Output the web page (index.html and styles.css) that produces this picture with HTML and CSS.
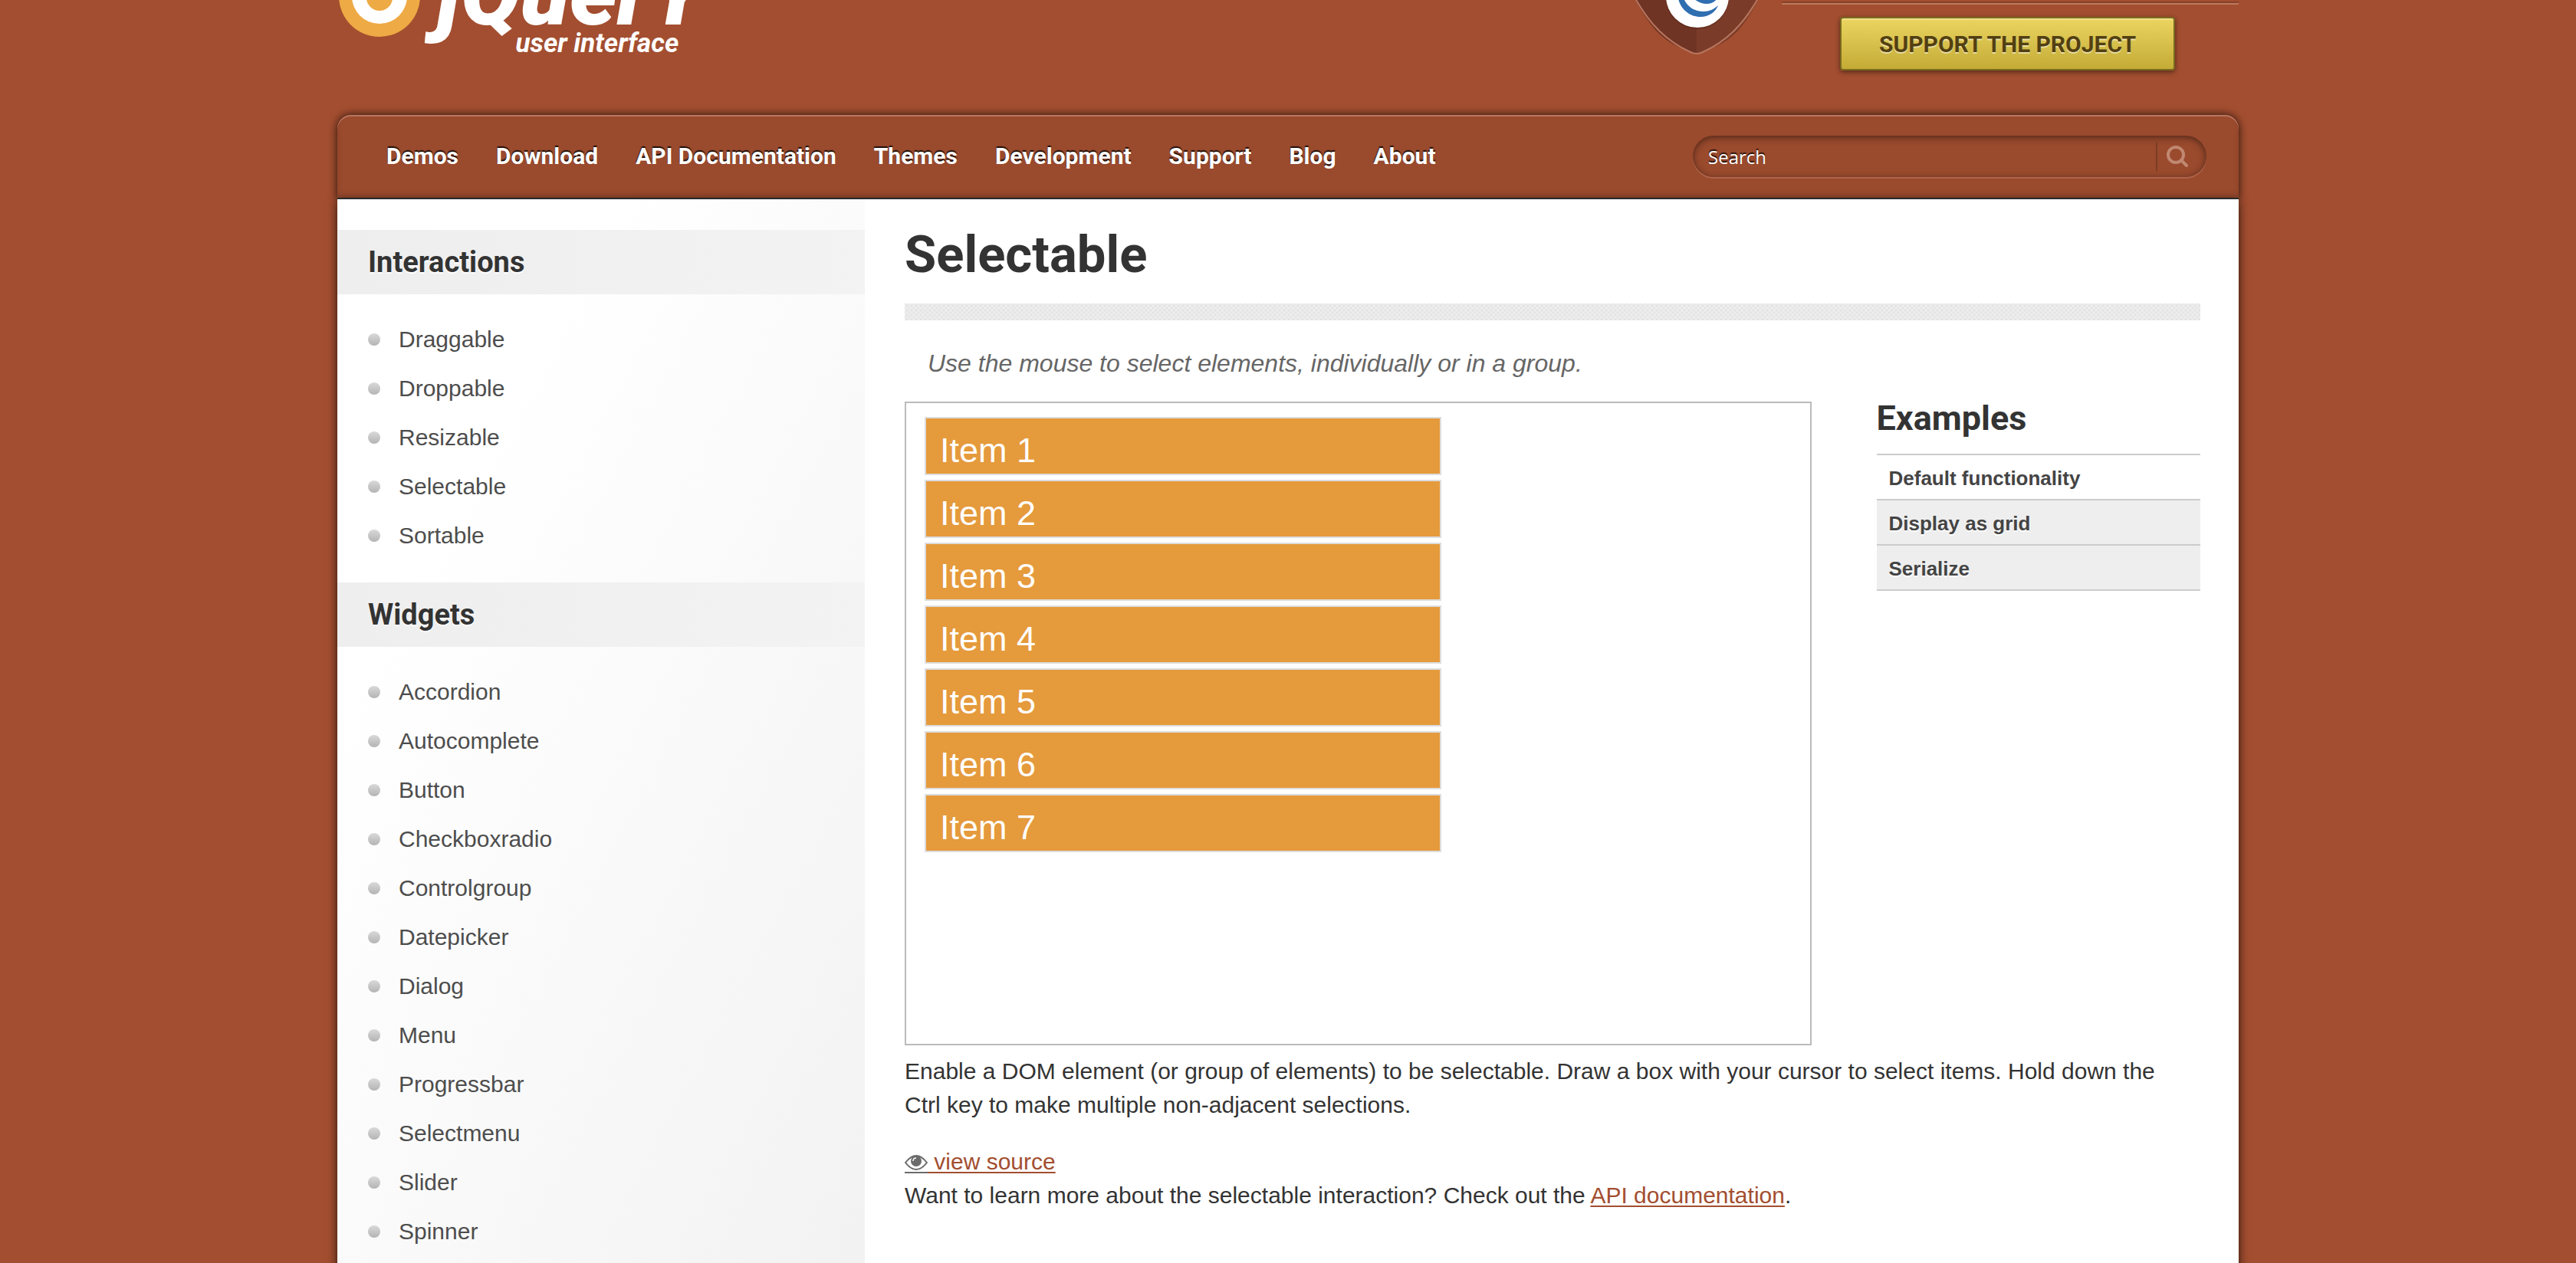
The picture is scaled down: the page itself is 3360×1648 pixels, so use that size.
FILE: index.html
```html
<!DOCTYPE html>
<html lang="en">
<head>
<meta charset="utf-8">
<title>Selectable | jQuery UI</title>
<link rel="stylesheet" href="styles.css">
</head>
<body>
<div class="page">
  <header class="header">
    <a class="logo" href="#" aria-label="jQuery user interface">
      <svg class="logo-mark" width="110" height="50" viewBox="0 0 110 50" aria-hidden="true">
        <circle cx="55" cy="-5" r="53" fill="#eeaa44"/>
        <circle cx="55" cy="-5" r="36" fill="#fff"/>
        <circle cx="55" cy="-3" r="17" fill="#eeaa44"/>
      </svg>
      <span class="wordmark">
        <span class="wordmark-name">jQuer<span class="tall">y</span></span>
        <span class="wordmark-sub">user interface</span>
      </span>
    </a>
    <div class="promo">
      <svg class="shield" width="170" height="74" viewBox="0 0 170 74" aria-hidden="true">
        <path d="M5 0 Q18 24 32 40 Q46 54 59 60 L79 69 Q82 70 85 70 V0 Z" fill="#6f3423"/>
        <path d="M165 0 Q153 24 139 40 Q125 54 111 60 L91 69 Q88 70 85 70 V0 Z" fill="#7a3c29"/>
        <path d="M5 -2 C24 32 46 54 77 68 Q85 72 93 68 C124 54 146 32 165 -2" fill="none" stroke="#b9765f" stroke-width="2"/>
        <circle cx="86" cy="-3" r="41" fill="#5a281a" opacity="0.5"/>
        <circle cx="86" cy="-5" r="41" fill="#fff"/>
        <path d="M61 -2 C64 12 76 22 90 22 C102 22 110 15 113 7 C108 12 101 15 94 15 C82 15 73 9 68 -2 Z" fill="#2f6eb0"/>
        <path d="M81 -2 Q89 5 98 5 Q107 5 112 -2 Z" fill="#2f6eb0"/>
      </svg>
      <div class="support">
        <button class="support-button" type="button">SUPPORT THE PROJECT</button>
      </div>
    </div>
  </header>

  <nav class="nav">
    <ul class="menu">
      <li><a href="#">Demos</a></li>
      <li><a href="#">Download</a></li>
      <li><a href="#">API Documentation</a></li>
      <li><a href="#">Themes</a></li>
      <li><a href="#">Development</a></li>
      <li><a href="#">Support</a></li>
      <li><a href="#">Blog</a></li>
      <li><a href="#">About</a></li>
    </ul>
    <form class="search">
      <input class="search-input" type="text" placeholder="Search" aria-label="Search">
      <button class="search-button" type="submit" aria-label="Submit search">
        <svg width="30" height="30" viewBox="0 0 30 30" aria-hidden="true"><circle cx="13" cy="13" r="10" fill="none" stroke="#c08871" stroke-width="4"/><path d="M20 20l7 7" stroke="#c08871" stroke-width="4" stroke-linecap="round"/></svg>
      </button>
    </form>
  </nav>

  <div class="content">
    <aside class="sidebar">
      <h3>Interactions</h3>
      <ul>
        <li><a href="#">Draggable</a></li>
        <li><a href="#">Droppable</a></li>
        <li><a href="#">Resizable</a></li>
        <li><a href="#">Selectable</a></li>
        <li><a href="#">Sortable</a></li>
      </ul>
      <h3>Widgets</h3>
      <ul>
        <li><a href="#">Accordion</a></li>
        <li><a href="#">Autocomplete</a></li>
        <li><a href="#">Button</a></li>
        <li><a href="#">Checkboxradio</a></li>
        <li><a href="#">Controlgroup</a></li>
        <li><a href="#">Datepicker</a></li>
        <li><a href="#">Dialog</a></li>
        <li><a href="#">Menu</a></li>
        <li><a href="#">Progressbar</a></li>
        <li><a href="#">Selectmenu</a></li>
        <li><a href="#">Slider</a></li>
        <li><a href="#">Spinner</a></li>
      </ul>
    </aside>

    <main class="main">
      <h1>Selectable</h1>
      <div class="rule"></div>
      <p class="intro">Use the mouse to select elements, individually or in a group.</p>
      <div class="demo-row">
        <div class="demo">
          <ol class="items">
            <li>Item 1</li>
            <li>Item 2</li>
            <li>Item 3</li>
            <li>Item 4</li>
            <li>Item 5</li>
            <li>Item 6</li>
            <li>Item 7</li>
          </ol>
        </div>
        <section class="examples">
          <h2>Examples</h2>
          <ul>
            <li class="active"><a href="#">Default functionality</a></li>
            <li><a href="#">Display as grid</a></li>
            <li><a href="#">Serialize</a></li>
          </ul>
        </section>
      </div>
      <p class="text">Enable a DOM element (or group of elements) to be selectable. Draw a box with your cursor to select items. Hold down the Ctrl key to make multiple non-adjacent selections.</p>
      <div class="text">
        <a class="view-source" href="#"><svg class="eye" width="30" height="24" viewBox="0 0 30 24" aria-hidden="true"><path d="M1 10 Q15 -8 29 10 Q15 28 1 10 Z" fill="#fff" stroke="#6b6b6b" stroke-width="2"/><circle cx="15" cy="8" r="7" fill="#6b6b6b"/><path d="M11 8 Q11 4 15 4" fill="none" stroke="#fff" stroke-width="1.500"/><path d="M0 23h30" stroke="#6b6b6b" stroke-width="2"/></svg> view source</a>
      </div>
      <p>Want to learn more about the selectable interaction? Check out the <a href="#">API documentation</a>.</p>
    </main>
  </div>
</div>
</body>
</html>
```

FILE: styles.css
```css
* { box-sizing: border-box; }

body {
  margin: 0;
  background: #a34e30;
  color: #333;
  font-family: "Liberation Sans", Arial, sans-serif;
  font-size: 30px;
  line-height: 44px;
}

h1, h2, h3, p, ul, ol { margin: 0; padding: 0; }
ul, ol { list-style: none; }
a { color: #a34e30; text-underline-offset: 3px; text-decoration-thickness: 2px; text-decoration-skip-ink: none; }

.page {
  display: flex;
  flex-direction: column;
  width: calc(100% - 80px);
  max-width: 2480px;
  min-height: 100vh;
  margin: 0 auto;
}

.header {
  display: flex;
  justify-content: space-between;
  height: 150px;
  overflow: hidden;
}

.logo { display: flex; color: #fff; text-decoration: none; font-family: Roboto, sans-serif; font-style: italic; }
.wordmark { display: flex; flex-direction: column; align-items: flex-end; margin: -53px 0 0 20px; }
.wordmark-name { font-size: 117px; font-weight: 900; line-height: 90px; }
.tall { text-transform: uppercase; }
.wordmark-sub { padding-right: 34px; font-size: 35px; font-weight: 700; line-height: 40px; }

.promo { display: flex; gap: 26px; }
.support { width: 596px; padding-top: 22px; background: linear-gradient(#8a4027 0 2px, #bd7a60 2px 4px) 0 2px / 100% 4px no-repeat; }
.support-button {
  display: block;
  margin-left: 76px;
  height: 70px;
  padding: 0 49px;
  border: 2px solid #7a6a1e;
  border-radius: 4px;
  background: linear-gradient(#ebd560, #c3ab36);
  box-shadow: inset 0 2px 0 #f0df88, 0 2px 6px rgba(0, 0, 0, .5);
  color: #523f11;
  font-family: Roboto, sans-serif;
  font-size: 30px;
  font-weight: 700;
  text-shadow: 0 2px 0 rgba(255, 255, 255, .5);
}

.nav {
  display: flex;
  justify-content: space-between;
  align-items: center;
  height: 110px;
  padding: 0 42px 0 64px;
  border-bottom: 2px solid #2f3434;
  border-radius: 18px 18px 0 0;
  background: #9a4a2d;
  box-shadow: inset 0 2px 0 #b9765f, inset 0 -4px 6px rgba(0, 0, 0, .1), 0 0 12px rgba(0, 0, 0, .8);
}
.menu { display: flex; gap: 49px; font-family: Roboto, sans-serif; font-size: 30px; font-weight: 700; }
.menu a { color: #fff; text-decoration: none; text-shadow: 0 -2px 1px rgba(0, 0, 0, .8); }
.search {
  display: flex;
  width: 670px;
  height: 54px;
  padding: 0 12px 0 20px;
  border-radius: 27px;
  background: #9a4a2d;
  box-shadow: inset 0 2px 10px rgba(0, 0, 0, .5), 0 2px 0 #b0644b;
}
.search-input { flex: 1; min-width: 0; padding: 0; border: 0; background: none; outline: 0; color: #fff; font-family: "Open Sans", sans-serif; font-size: 24px; text-shadow: 0 -2px 1px rgba(0, 0, 0, .8); }
.search-input::placeholder { color: #fff; opacity: 1; }
.search-button { display: flex; align-items: center; justify-content: center; width: 54px; height: 38px; margin: 8px 0; padding: 0; border: 0; border-left: 2px solid #7d3c25; background: none; }

.content { display: flex; flex: 1; background: #fff; box-shadow: 0 4px 12px rgba(0, 0, 0, .8); }

.sidebar { width: 688px; padding-top: 40px; background: linear-gradient(118deg, #fff 25%, #f2f2f2); }
.sidebar h3 { padding: 20px 40px; background: linear-gradient(90deg, #eee, #f3f3f3); font-family: Roboto, sans-serif; font-size: 38px; line-height: 44px; text-shadow: 0 2px 0 #fff; }
.sidebar ul { padding: 27px 40px 29px; }
.sidebar li { display: flex; align-items: center; gap: 24px; height: 64px; }
.sidebar li::before { content: ""; width: 16px; height: 16px; border-radius: 50%; background: linear-gradient(#d9d9d9, #b4b4b4); }
.sidebar a { color: #4d4d4d; text-decoration: none; }

.main { flex: 1; min-width: 0; padding: 36px 50px 40px 52px; }
h1 { font-family: Roboto, sans-serif; font-size: 67px; line-height: 72px; }
.rule {
  height: 22px;
  margin-top: 28px;
  background: radial-gradient(circle, #e2e2e2 1px, transparent 2px) 0 0 / 6px 6px, radial-gradient(circle, #e4e4e4 1px, transparent 2px) 3px 3px / 6px 6px, #eee;
}
.intro { margin: 34px 0 28px; padding-left: 30px; color: #666; font-size: 32px; font-style: italic; }

.demo-row { display: grid; grid-template-columns: 70% 25%; justify-content: space-between; }
.demo { min-height: 840px; padding: 18px 32px 18px 24px; border: 2px solid #bbb; }
.items { display: grid; gap: 6px; width: 60%; }
.items li { height: 76px; padding: 14px 18px 0; border: 2px solid #ddd; background: #e59a3c; color: #fff; font-size: 45px; line-height: 56px; }

.examples { font-size: 26px; }
.examples h2 { padding-bottom: 24px; border-bottom: 2px solid #ccc; font-family: Roboto, sans-serif; font-size: 45px; line-height: 44px; }
.examples li { padding: 8px 16px 5px; border-bottom: 2px solid #ccc; background: #eee; }
.examples .active { background: #fff; }
.examples a { color: #444; font-weight: 700; text-decoration: none; text-shadow: 0 2px 0 #fff; }

.text { margin-top: 12px; padding-right: 40px; }
.text + .text { margin-top: 30px; }
.eye { vertical-align: -5px; }
```
